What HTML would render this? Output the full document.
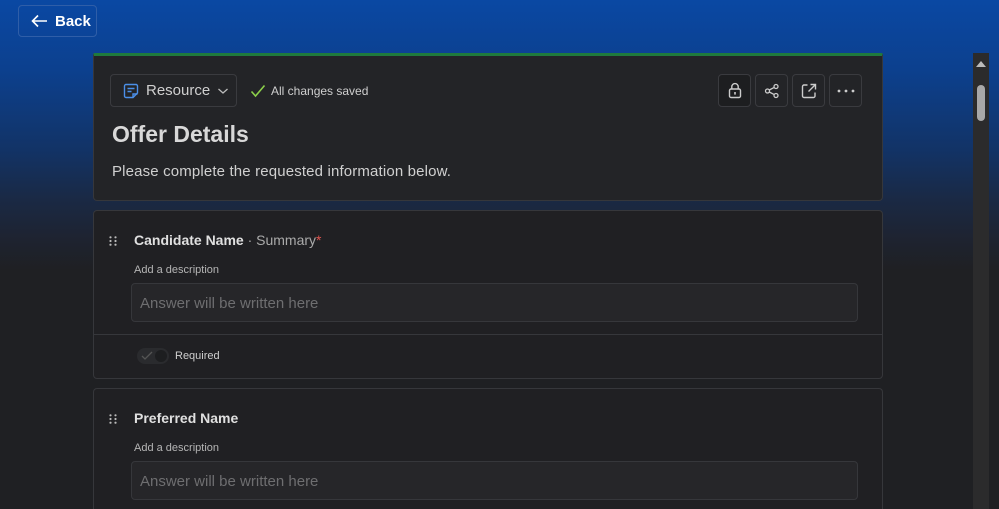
<!DOCTYPE html>
<html style="width:999px;height:509px;overflow:hidden;background:#1f2023"><head><meta charset="utf-8"><style>
*{box-sizing:border-box;margin:0;padding:0}
body{width:999px;height:509px;overflow:hidden;font-family:"Liberation Sans",sans-serif;color:#d6d6d6;
background:linear-gradient(180deg,#0a48a3 0px,#0c408e 70px,#123366 150px,#1a2944 200px,#1e2330 240px,#1f2023 270px,#1f2023 509px) no-repeat;position:relative}
.back{position:absolute;left:18px;top:5px;width:79px;height:32px;border:1px solid #2f5ea8;border-radius:4px;color:#fff;font-weight:bold;font-size:15px;display:flex;align-items:center;padding-left:12px;gap:7px}
.card{position:absolute;left:93px;width:790px;background:#202023;border:1px solid #36373b;border-radius:4px;overflow:hidden}
.hdr{top:53px;height:148px;background:#232427;border-top:3px solid #1f7a3c;border-radius:2px 2px 4px 4px}
.res{position:absolute;left:16px;top:18px;width:127px;height:33px;border:1px solid #3a3b3f;border-radius:4px;display:flex;align-items:center;padding-left:12px;gap:7px;font-size:15px;color:#cfcfcf;white-space:nowrap}
.saved{position:absolute;left:156px;top:28px;font-size:12px;color:#cfcfcf;display:flex;align-items:center;gap:5px}
h1{position:absolute;left:18px;top:65px;font-size:23px;font-weight:bold;color:#d8d8d8}
.sub{position:absolute;left:18px;top:107px;font-size:15px;color:#d0d0d0;letter-spacing:0.15px}
.ib{position:absolute;top:18px;width:33px;height:33px;border:1px solid #3a3b3f;border-radius:4px;display:flex;align-items:center;justify-content:center}
.drag{position:absolute;left:15px;width:8px;height:10px}
.q{position:absolute;left:40px;font-size:14px;font-weight:bold;color:#e0e0e0}
.q span{font-weight:normal;color:#aaa}
.desc{position:absolute;left:40px;font-size:11px;color:#b5b5b5}
.inp{position:absolute;left:37px;width:727px;height:39px;background:#262629;border:1px solid #36373b;border-radius:4px;font-size:15px;color:#6e6e70;padding:11px 0 0 8px}
.sb{position:absolute;left:973px;top:53px;width:16px;height:456px;background:#2b2b2c}
</style></head><body>
<div class="back"><svg width="17" height="14" viewBox="0 0 17 14"><path d="M16 7H2M7 1.5L1.5 7 7 12.5" stroke="#fff" stroke-width="1.6" fill="none"/></svg>Back</div>

<div class="card hdr">
 <div class="res"><svg width="16" height="16" viewBox="0 0 16 16"><path d="M3 1.5h10a1.5 1.5 0 0 1 1.5 1.5v7l-4.5 4.5H3A1.5 1.5 0 0 1 1.5 13V3A1.5 1.5 0 0 1 3 1.5z" stroke="#4b8fe8" stroke-width="1.4" fill="none"/><path d="M4.5 5.5h7M4.5 8.5h4M10 14.5v-3.5h4.5" stroke="#4b8fe8" stroke-width="1.4" fill="none"/></svg>Resource<svg width="12" height="8" viewBox="0 0 12 8"><path d="M1.5 2l4.5 4 4.5-4" stroke="#bbb" stroke-width="1.3" fill="none"/></svg></div>
 <div class="saved"><svg width="16" height="14" viewBox="0 0 16 14"><path d="M1.5 7.5l4 4.5L14.5 1.5" stroke="#8cd04a" stroke-width="1.6" fill="none"/></svg>All changes saved</div>
 <h1>Offer Details</h1>
 <div class="sub">Please complete the requested information below.</div>
 <div class="ib" style="left:624px;background:#1d1e20"><svg width="14" height="17" viewBox="0 0 14 17"><rect x="1.5" y="7" width="11" height="8.5" rx="1.5" stroke="#ccc" stroke-width="1.4" fill="none"/><path d="M3.8 7V4.8a3.2 3.2 0 0 1 6.4 0V7" stroke="#ccc" stroke-width="1.4" fill="none"/><rect x="6.2" y="10" width="1.6" height="2.6" fill="#ccc"/></svg></div>
 <div class="ib" style="left:661px"><svg width="16" height="16" viewBox="0 0 16 16"><circle cx="12" cy="3.5" r="2" stroke="#ccc" stroke-width="1.3" fill="none"/><circle cx="3.5" cy="8" r="2" stroke="#ccc" stroke-width="1.3" fill="none"/><circle cx="12" cy="12.5" r="2" stroke="#ccc" stroke-width="1.3" fill="none"/><path d="M5.3 7l4.9-2.6M5.3 9l4.9 2.6" stroke="#ccc" stroke-width="1.3"/></svg></div>
 <div class="ib" style="left:698px"><svg width="16" height="16" viewBox="0 0 16 16"><path d="M6.5 2H3a1.5 1.5 0 0 0-1.5 1.5v9.5A1.5 1.5 0 0 0 3 14.5h9.5A1.5 1.5 0 0 0 14 13V9.5M9.5 1.5h5v5M14.5 1.5L7.5 8.5" stroke="#ccc" stroke-width="1.4" fill="none"/></svg></div>
 <div class="ib" style="left:735px"><svg width="18" height="4" viewBox="0 0 18 4"><circle cx="2" cy="2" r="1.4" fill="#ccc"/><circle cx="9" cy="2" r="1.4" fill="#ccc"/><circle cx="16" cy="2" r="1.4" fill="#ccc"/></svg></div>
</div>

<div class="card" style="top:210px;height:169px">
 <svg class="drag" style="top:25px" viewBox="0 0 8 10"><g fill="#bbb"><circle cx="1.5" cy="1.3" r="1.1"/><circle cx="6.5" cy="1.3" r="1.1"/><circle cx="1.5" cy="5" r="1.1"/><circle cx="6.5" cy="5" r="1.1"/><circle cx="1.5" cy="8.7" r="1.1"/><circle cx="6.5" cy="8.7" r="1.1"/></g></svg>
 <div class="q" style="top:21px">Candidate Name <span>· Summary</span><span style="color:#e0554f">*</span></div>
 <div class="desc" style="top:53px">Add a description</div>
 <div class="inp" style="top:72px">Answer will be written here</div>
 <div style="position:absolute;left:0;right:0;top:123px;border-top:1px solid #36373b"></div>
 <div style="position:absolute;left:43px;top:137px;width:32px;height:16px;border-radius:8px;background:#2a2b2e"><svg width="12" height="10" viewBox="0 0 12 10" style="position:absolute;left:4px;top:3px"><path d="M1 5l3 3 7-7" stroke="#555" stroke-width="1.3" fill="none"/></svg><div style="position:absolute;right:2px;top:2px;width:12px;height:12px;border-radius:6px;background:#1d1e20"></div></div>
 <div style="position:absolute;left:81px;top:139px;font-size:11px;color:#cfcfcf">Required</div>
</div>

<div class="card" style="top:388px;height:121px;border-bottom:none;border-radius:4px 4px 0 0">
 <svg class="drag" style="top:25px" viewBox="0 0 8 10"><g fill="#bbb"><circle cx="1.5" cy="1.3" r="1.1"/><circle cx="6.5" cy="1.3" r="1.1"/><circle cx="1.5" cy="5" r="1.1"/><circle cx="6.5" cy="5" r="1.1"/><circle cx="1.5" cy="8.7" r="1.1"/><circle cx="6.5" cy="8.7" r="1.1"/></g></svg>
 <div class="q" style="top:21px">Preferred Name</div>
 <div class="desc" style="top:53px">Add a description</div>
 <div class="inp" style="top:72px">Answer will be written here</div>
</div>

<div class="sb"><svg width="16" height="12" viewBox="0 0 16 12" style="position:absolute;top:5px"><path d="M3 9l5-6 5 6z" fill="#bbb"/></svg><div style="position:absolute;left:4px;top:32px;width:8px;height:36px;border-radius:4px;background:#a8a8a8"></div></div>
</body></html>
